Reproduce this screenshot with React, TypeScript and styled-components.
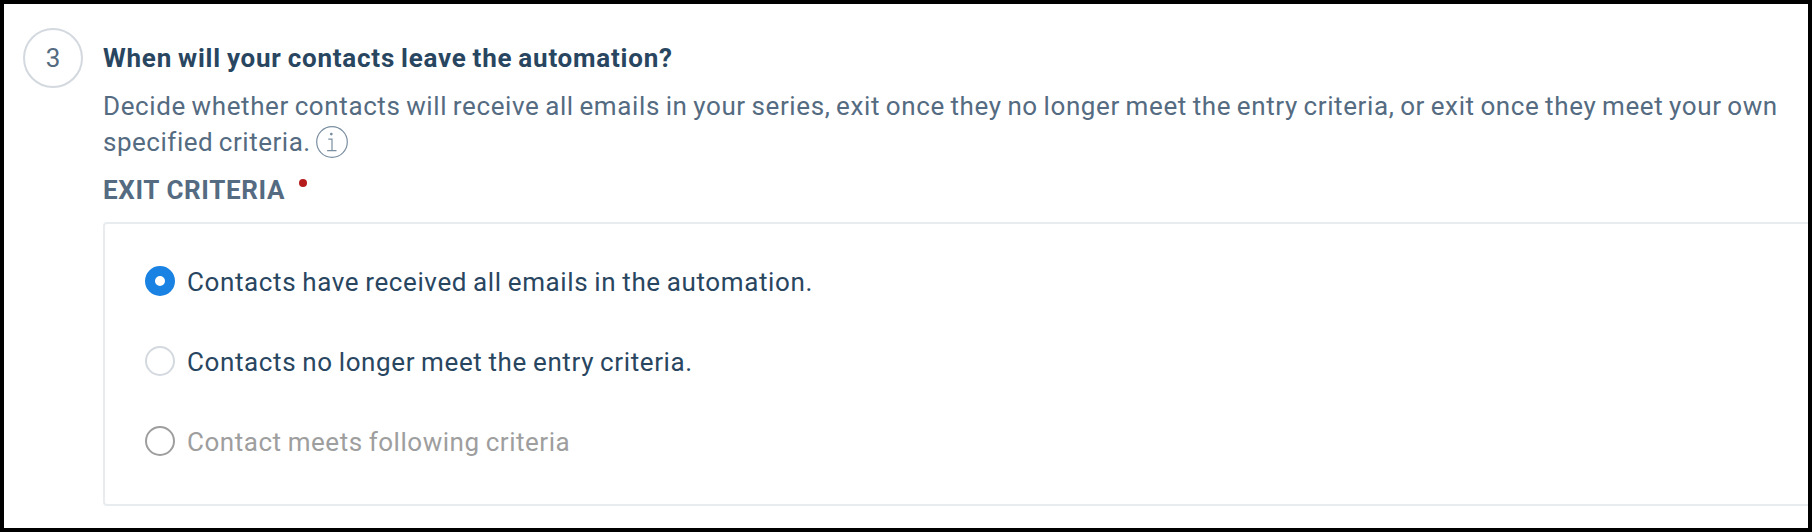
import React, { useState } from "react";
import styled, { createGlobalStyle } from "styled-components";

const GlobalStyle = createGlobalStyle`
  *, *::before, *::after { box-sizing: border-box; }
  body {
    margin: 0;
    background: #fff;
    font-family: Roboto, "Liberation Sans", sans-serif;
    font-size: 26px;
    line-height: 36px;
    color: #546b81;
  }
`;

const Frame = styled.main`
  display: flex;
  gap: 20px;
  width: 100%;
  height: 532px;
  padding: 24px 0 0 19px;
  border: 4px solid #000;
  overflow: hidden;
`;

const StepNumber = styled.div`
  flex: none;
  display: flex;
  align-items: center;
  justify-content: center;
  width: 60px;
  height: 60px;
  border: 2px solid #d3d9df;
  border-radius: 50%;
`;

const StepBody = styled.section`
  flex: 1;
  min-width: 0;
  padding-top: 12px;
`;

const Title = styled.h2`
  margin: 0 0 12px;
  font-size: inherit;
  font-weight: 700;
  letter-spacing: 0.77px;
  word-spacing: -1.2px;
  color: #294661;
`;

const Description = styled.p`
  width: 1690px;
  margin: 0 0 12px;
  letter-spacing: 0.61px;
  word-spacing: -1.35px;
`;

const LastLine = styled.span`
  display: flex;
  letter-spacing: 0.52px;
`;

const InfoIcon = styled.svg`
  flex: none;
  width: 32px;
  height: 32px;
  margin: 2px 0 0 5px;
  fill: none;
  stroke: #7a8ea1;
  stroke-width: 1.2;
`;

const FieldLabel = styled.div`
  display: flex;
  font-weight: 700;
  letter-spacing: 0.63px;
`;

const RequiredDot = styled.span`
  width: 8px;
  height: 8px;
  margin: 7px 0 0 14px;
  border-radius: 50%;
  background: #b71c1c;
`;

const OptionBox = styled.div`
  display: flex;
  flex-direction: column;
  gap: 44px;
  height: 284px;
  margin: 14px -10px 0 0;
  padding: 40px;
  border: 2px solid #e9ecef;
  border-radius: 4px;
`;

const Option = styled.label<{ $disabled?: boolean }>`
  display: flex;
  gap: 12px;
  height: 36px;
  letter-spacing: ${(p) => (p.$disabled ? 0.54 : 0.61)}px;
  word-spacing: -1px;
  color: ${(p) => (p.$disabled ? "#9e9e9e" : "#294661")};
`;

const Radio = styled.input`
  appearance: none;
  flex: none;
  width: 30px;
  height: 30px;
  margin: 2px 0 0;
  border: 2px solid #d3d9df;
  border-radius: 50%;
  background: #fff;

  &:checked {
    border: 10px solid #1a82e2;
  }

  &:disabled {
    border-color: #9e9e9e;
  }
`;

const OPTIONS = [
  { label: "Contacts have received all emails in the automation." },
  { label: "Contacts no longer meet the entry criteria." },
  { label: "Contact meets following criteria", disabled: true },
];

export default function App() {
  const [selected, setSelected] = useState(0);
  return (
    <>
      <GlobalStyle />
      <Frame>
        <StepNumber>3</StepNumber>
        <StepBody>
          <Title>When will your contacts leave the automation?</Title>
          <Description>
            Decide whether contacts will receive all emails in your series, exit once they no longer
            meet the entry criteria, or exit once they meet your own{" "}
            <LastLine>
              specified criteria.
              <InfoIcon viewBox="0 0 32 32" aria-label="More information">
                <circle cx="16" cy="16" r="15.3" />
                <path d="M12.3 13.2h3.7v11.3M11.1 24.7h9.4" />
                <circle cx="15.3" cy="8.1" r="1.4" fill="#7a8ea1" stroke="none" />
              </InfoIcon>
            </LastLine>
          </Description>
          <FieldLabel>
            EXIT CRITERIA
            <RequiredDot />
          </FieldLabel>
          <OptionBox>
            {OPTIONS.map((option, i) => (
              <Option key={option.label} $disabled={option.disabled}>
                <Radio
                  type="radio"
                  name="exit-criteria"
                  checked={selected === i}
                  disabled={option.disabled}
                  onChange={() => setSelected(i)}
                />
                {option.label}
              </Option>
            ))}
          </OptionBox>
        </StepBody>
      </Frame>
    </>
  );
}
